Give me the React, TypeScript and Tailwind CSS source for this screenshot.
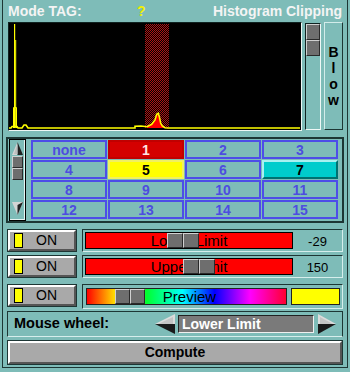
import React from "react";

const sq =
  "bg-[#6e6e6e] border border-t-[#d0d0d0] border-l-[#d0d0d0] border-r-[#2a2a2a] border-b-[#2a2a2a]";

const cells: { t: string; k?: string }[] = [
  { t: "none" }, { t: "1", k: "red" }, { t: "2" }, { t: "3" },
  { t: "4" }, { t: "5", k: "yellow" }, { t: "6" }, { t: "7", k: "cyan" },
  { t: "8" }, { t: "9" }, { t: "10" }, { t: "11" },
  { t: "12" }, { t: "13" }, { t: "14" }, { t: "15" },
];

const cellStyle: Record<string, string> = {
  none: "border-2 border-[#4d4de8] text-[#4d4de0]",
  red: "bg-[#d40000] border-2 border-[#c00000] text-[#ffe4e4]",
  yellow: "bg-[#ffff00] border-2 border-[#f0f060] text-black",
  cyan: "bg-[#00cccc] border-2 border-t-[#a8f0f0] border-l-[#a8f0f0] border-r-[#007070] border-b-[#007070] text-black",
};

function OnButton() {
  return (
    <div className="w-[70px] h-full border border-[#1d3634]">
      <div className="h-full flex items-center bg-[#a9a9a9] border-2 border-t-white border-l-white border-r-[#555] border-b-[#555] pl-[4px]">
        <div className="w-[9px] h-[15px] bg-[#ffff00] border border-black" />
        <span className="flex-1 text-center text-[14px] text-black pr-[4px]">ON</span>
      </div>
    </div>
  );
}

function Slider({ label, value, left }: { label: string; value: string; left: string }) {
  return (
    <div className="flex w-[261px] h-[23px] border border-t-[#1d3634] border-l-[#1d3634] border-r-[#d6eeec] border-b-[#d6eeec] pl-[2px] pt-[2px]">
      <div className="relative w-[208px] h-[17px] bg-[#ff0000] border border-black flex items-center justify-center text-[15px] leading-none text-black">
        {label}
        <div className={`absolute top-0 bottom-0 flex ${left}`}>
          <div className={`w-[16px] h-full ${sq}`} />
          <div className={`w-[16px] h-full ${sq}`} />
        </div>
      </div>
      <div className="flex-1 flex items-center justify-center text-[13px] text-black">{value}</div>
    </div>
  );
}

export default function App() {
  return (
    <div className="w-[350px] h-[372px] bg-[#7ebcb8] font-['Liberation_Sans',Arial,sans-serif] select-none">
      <div className="ml-[2px] w-[346px] h-[368px] border-l border-r border-b border-[#1d3634] flex flex-col">
        {/* header */}
        <div className="h-[22px] flex items-center pl-[5px] pr-[5px] font-bold text-[14px] text-[#f4f4f4]">
          <span className="w-[129px]">Mode TAG:</span>
          <span className="text-[#f0f000]">?</span>
          <span className="flex-1" />
          <span>Histogram Clipping</span>
        </div>

        {/* histogram row */}
        <div className="flex h-[109px] ml-[5px] gap-[3px]">
          <div className="w-[294px] h-[109px] border border-t-[#0f2220] border-l-[#0f2220] border-r-[#eef8f6] border-b-[#eef8f6] bg-black">
            <svg width="292" height="107" viewBox="9 23 292 107" className="block">
              <defs>
                <pattern id="chk" width="2" height="2" patternUnits="userSpaceOnUse">
                  <rect x="0" y="0" width="1" height="1" fill="#b01414" />
                  <rect x="1" y="1" width="1" height="1" fill="#b01414" />
                </pattern>
              </defs>
              <rect x="9" y="23" width="292" height="107" fill="#000" />
              <rect x="145" y="24" width="24" height="104" fill="url(#chk)" />
              <polygon
                points="147,128 147,126.5 151.7,124.3 155,120 156.7,114.3 158.3,113.3 159.3,116.7 160.7,123.3 162.3,126 165,128"
                fill="#ff0000"
              />
              <rect x="14" y="24" width="1.2" height="104" fill="#ffff00" />
              <rect x="15.2" y="40" width="1" height="88" fill="#ffff00" />
              <polyline points="13.5,128 13.5,107.5 16.5,107.5 16.5,128" fill="none" stroke="#ffff00" strokeWidth="1" />
              <polyline
                points="9,128 11,128 12,126.5 13,126.5 17,126.5 18,128 22,128 24,125 26,125 28,128 135,128 135,126.3 141,126 147,126.7 151.7,124.3 155,120 156.7,114.3 158.3,113.3 159.3,116.7 160.7,123.3 162.3,126 165,127.7 168,128 300,128"
                fill="none"
                stroke="#ffff00"
                strokeWidth="1.6"
              />
            </svg>
          </div>
          <div className="self-center w-[16px] h-[107px] border border-t-[#0f2220] border-l-[#0f2220] border-r-[#eef8f6] border-b-[#eef8f6] flex flex-col">
            <div className={`w-full h-[16px] ${sq}`} />
            <div className={`w-full h-[16px] ${sq}`} />
          </div>
          <div className="w-[19px] h-[108px] border border-t-[#d2ecea] border-l-[#d2ecea] border-r-[#1d3634] border-b-[#1d3634] flex flex-col items-center justify-center font-bold text-[14px] leading-[16px] text-black">
            <span>B</span>
            <span>l</span>
            <span>o</span>
            <span>w</span>
          </div>
        </div>

        {/* tag grid */}
        <div className="mt-[6px] ml-[3px] w-[338px] h-[86px] border-2 border-[#1d3634] flex items-start pl-[1px]">
          <div className="w-[17px] h-[82px] border border-black">
            <div className="h-full border-r border-b border-[#e6f4f2] flex flex-col items-center">
              <svg width="11" height="14" viewBox="0 0 11 14" className="mt-[2px]">
                <polygon points="5.5,0 0,13 5.5,13" fill="#d4d4d4" />
                <polygon points="5.5,0 11,13 5.5,13" fill="#222" />
                <polygon points="5.5,2 2,12 5.5,12" fill="#bdbdbd" />
              </svg>
              <div className={`w-[11px] h-[12px] ${sq}`} />
              <div className={`w-[11px] h-[12px] ${sq}`} />
              <span className="flex-1" />
              <svg width="11" height="14" viewBox="0 0 11 14" className="mb-[3px]">
                <polygon points="0,0 11,0 5.5,13" fill="#d4d4d4" />
                <polygon points="11,0 5.5,13 5.5,3" fill="#222" />
              </svg>
            </div>
          </div>
          <div className="ml-[5px] mt-[1px] grid grid-cols-4 w-[307px] gap-x-[1px] gap-y-[1px]">
            {cells.map((c) => (
              <div
                key={c.t}
                className={`h-[19px] flex items-center justify-center font-bold text-[14px] leading-none ${cellStyle[c.k ?? "none"]}`}
              >
                {c.t}
              </div>
            ))}
          </div>
        </div>

        {/* limit rows */}
        <div className="mt-[6px] ml-[4px] flex h-[23px] gap-[5px]">
          <OnButton />
          <Slider label="Lower Limit" value="-29" left="left-[81px]" />
        </div>
        <div className="mt-[3px] ml-[4px] flex h-[23px] gap-[5px]">
          <OnButton />
          <Slider label="Upper Limit" value="150" left="left-[97px]" />
        </div>

        {/* preview row */}
        <div className="mt-[6px] ml-[4px] flex h-[25px] gap-[5px]">
          <div className="h-[23px]">
            <OnButton />
          </div>
          <div className="flex w-[261px] h-[25px] border border-t-[#1d3634] border-l-[#1d3634] border-r-[#d6eeec] border-b-[#d6eeec] pl-[3px] pt-[3px]">
            <div className="relative w-[201px] h-[17px] border border-[#222] bg-[linear-gradient(to_right,#ff0000,#ffee00_15%,#00ff30_30%,#00ffff_48%,#0000ff_64%,#ff00ff_82%,#ff0030)] flex items-center justify-center text-[15px] leading-none text-black">
              <span className="pl-[6px]">Preview</span>
              <div className="absolute top-0 bottom-0 left-[28px] flex">
                <div className={`w-[15px] h-full ${sq}`} />
                <div className={`w-[15px] h-full ${sq}`} />
              </div>
            </div>
            <div className="ml-[4px] w-[49px] h-[17px] bg-[#ffff00] border border-[#222]" />
          </div>
        </div>

        {/* mouse wheel row */}
        <div className="mt-[2px] ml-[4px] w-[336px] h-[26px] border border-t-[#1d3634] border-l-[#1d3634] border-r-[#1d3634] border-b-[#d6eeec] flex items-center">
          <span className="w-[147px] pl-[6px] font-bold text-[14.5px] text-black">Mouse wheel:</span>
          <svg width="20" height="20" viewBox="0 0 20 20">
            <polygon points="0,10 20,0 20,10" fill="#dcdcdc" />
            <polygon points="0,10 20,10 20,20" fill="#1a1a1a" />
            <polygon points="3,10 18,3 18,10" fill="#c4c4c4" />
          </svg>
          <div className="ml-[3px] w-[136px] h-[18px] bg-[#7a7a7a] border border-t-[#222] border-l-[#222] border-r-[#f0f0f0] border-b-[#f0f0f0] flex items-center pl-[3px] font-bold text-[14px] text-white">
            Lower Limit
          </div>
          <svg width="18" height="20" viewBox="0 0 18 20" className="ml-[4px]">
            <polygon points="0,0 18,10 0,10" fill="#dcdcdc" />
            <polygon points="0,10 18,10 0,20" fill="#1a1a1a" />
            <polygon points="2,3 15,10 2,10" fill="#c4c4c4" />
          </svg>
        </div>

        {/* compute */}
        <div className="mt-[3px] ml-[4px] w-[336px] h-[25px] border border-[#1d3634]">
          <div className="h-full bg-[#a9a9a9] border-2 border-t-white border-l-white border-r-[#555] border-b-[#555] flex items-center justify-center font-bold text-[14px] text-black">
            Compute
          </div>
        </div>
      </div>
    </div>
  );
}
